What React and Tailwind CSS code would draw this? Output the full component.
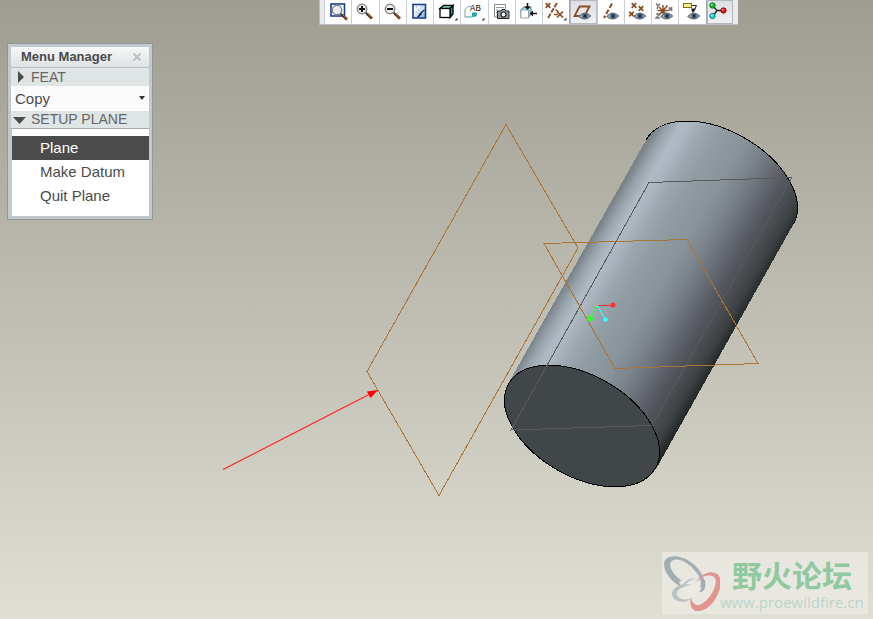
import React from "react";

const BROWN = "#8a4b22";

function Eye() {
  return (
    <g>
      <path d="M10 16.5Q15.5 10 21.5 16Q16 21.500 10 16.500Z" fill="#a3b0bd" stroke="#7b7268" strokeWidth="1.200" />
      <circle cx="16" cy="16" r="2.700" fill="#34608f" />
      <circle cx="16" cy="16" r="1.200" fill="#14263b" />
    </g>
  );
}

function More() {
  return <path d="M24.500 17.500v3h-3z" fill="#444" />;
}

function Lens({ x, y }) {
  return (
    <g transform={`translate(${x} ${y})`}>
      <path d="M3.500 3.500l2 2" stroke="#333" strokeWidth="1.800" />
      <path d="M5 4.800l5 4.700" stroke="#5f3119" strokeWidth="2.800" />
      <path d="M5.500 4.500l4.500 4" stroke="#c48a64" strokeWidth="0.900" />
      <circle r="4.700" fill="#eceeee" stroke="#85898b" strokeWidth="1.500" />
    </g>
  );
}

function Cross({ x, y, color = BROWN, s = 2.3 }) {
  return (
    <path
      d={`M${x - s} ${y - s}L${x + s} ${y + s}M${x + s} ${y - s}L${x - s} ${y + s}`}
      stroke={color}
      strokeWidth="1.700"
    />
  );
}

const tools = [
  {
    name: "Zoom to fit",
    art: (
      <>
        <rect x="7" y="4" width="13.500" height="12" fill="#fff" stroke="#123f91" strokeWidth="1.600" />
        <Lens x={13} y={10} />
      </>
    ),
  },
  {
    name: "Zoom in",
    art: (
      <>
        <Lens x={11} y={9} />
        <path d="M8 9h6M11 6v6" stroke="#111" strokeWidth="2" />
      </>
    ),
  },
  {
    name: "Zoom out",
    art: (
      <>
        <Lens x={11} y={9} />
        <path d="M8 9h6" stroke="#111" strokeWidth="2" />
      </>
    ),
  },
  {
    name: "Repaint",
    art: (
      <>
        <defs>
          <linearGradient id="repaint" x1="0" y1="0" x2="1" y2="1">
            <stop offset="0.400" stopColor="#f0f5fa" />
            <stop offset="1" stopColor="#78a5dc" />
          </linearGradient>
        </defs>
        <rect x="7" y="4.500" width="12.500" height="13.500" fill="url(#repaint)" stroke="#123f91" strokeWidth="1.600" />
        <path d="M18.500 10l-2.500 2-2 2" stroke="#0b2252" strokeWidth="1.200" fill="none" />
        <path d="M14.500 12.500l1.500 1.500-3 3h-2z" fill="#0b2252" />
        <path d="M10 7h1M14 8h1M12 10h1M16 6.500h1M9.500 12h1" stroke="#7a8fa9" strokeWidth="1" />
      </>
    ),
  },
  {
    name: "Display style",
    more: true,
    art: (
      <>
        <path d="M7 8.500L10.500 5.500H20L17 8.500z" fill="#8ff0ee" stroke="#000" strokeWidth="1.300" />
        <path d="M17 8.500L20 5.500V14L17 17.500z" fill="#1b9c9c" stroke="#000" strokeWidth="1.300" />
        <rect x="7" y="8.500" width="10" height="9" fill="#fff" stroke="#000" strokeWidth="1.300" />
      </>
    ),
  },
  {
    name: "Saved orientations",
    more: true,
    art: (
      <>
        <path d="M5 9.500L8 6.500h3M5 9.500V17h7" stroke="#8b9599" fill="none" />
        <path d="M12 12.500h5V15l-2 2h-3z" fill="#27a5ae" />
        <path d="M5 17h8" stroke="#6fd5d9" />
        <text x="10" y="11" fontFamily="Liberation Mono, monospace" fontSize="9" fill="#111">
          AB
        </text>
      </>
    ),
  },
  {
    name: "View manager",
    art: (
      <>
        <path d="M6.500 4.500h11V9M6.500 4.500V17H9" fill="none" stroke="#888" />
        <path d="M8 7.500h8M8 10h2M8 12.500h1M8 15h1" stroke="#999" />
        <path d="M11 11h2l1-1.500h3l1 1.500h3v7.500H9.500V11z" fill="#969ba0" stroke="#202428" />
        <circle cx="15.500" cy="14.500" r="2.500" fill="#f3f3f3" stroke="#222" strokeWidth="1.200" />
      </>
    ),
  },
  {
    name: "Section",
    art: (
      <>
        <path d="M6 9.500L9 7h7v7l-2.500 3.500H6z" fill="#8ee5e6" stroke="#5d777c" />
        <rect x="6" y="10" width="7.500" height="8" fill="#fff" stroke="#8fa7ab" />
        <path d="M12.500 3v5M22 13.500h-5" stroke="#111" strokeWidth="1.600" />
        <path d="M9.500 6.500h6l-3 3.500zM18 10.500v6l-3.500-3z" fill="#111" />
      </>
    ),
  },
  {
    name: "Datum display filters",
    more: true,
    art: (
      <>
        <path d="M15 3L6 18" stroke={BROWN} strokeWidth="1.900" strokeDasharray="5 1.200" />
        <Cross x={6} y={5.5} />
        <Cross x={18} y={14.5} s={3} />
        <path d="M13.500 9.500l3 2M12 14.500h4" stroke={BROWN} strokeWidth="1.400" />
      </>
    ),
  },
  {
    name: "Plane display",
    on: true,
    art: (
      <>
        <path d="M10.500 6.500H20.500L15.500 16H5.500z" fill="none" stroke={BROWN} strokeWidth="1.800" />
        <Eye />
      </>
    ),
  },
  {
    name: "Axis display",
    art: (
      <>
        <path d="M15 3.500L7 18" stroke={BROWN} strokeWidth="2" strokeDasharray="5 2" />
        <Eye />
      </>
    ),
  },
  {
    name: "Point display",
    art: (
      <>
        <Cross x={10} y={5.5} />
        <Cross x={17} y={8.5} />
        <Cross x={7.5} y={14} />
        <Eye />
      </>
    ),
  },
  {
    name: "Coordinate system display",
    art: (
      <>
        <path d="M12 5v11M6.500 10.500h11M8 7l8 8M16.500 5.500L8 15" stroke={BROWN} strokeWidth="1.400" />
        <path d="M5 3.500l2 2.500L9 3.500M7 6L6 9" stroke="#777" strokeWidth="1.400" fill="none" />
        <Cross x={19.5} y={9} color="#777" s={1.7} />
        <path d="M5 14h4l-4 4h4" stroke="#777" strokeWidth="1.400" fill="none" />
        <Eye />
      </>
    ),
  },
  {
    name: "Annotation display",
    art: (
      <>
        <rect x="5.500" y="3.500" width="8" height="4" fill="#f5ef86" stroke="#77702a" />
        <path d="M14 5.500h4.500L15.500 12" stroke="#222" fill="none" />
        <path d="M13 8.500h5L14.500 13z" fill="#222" />
        <Eye />
      </>
    ),
  },
  {
    name: "Spin center",
    on: true,
    art: (
      <>
        <path d="M7 6l4 4.500L7 16M11 10.500h6" stroke="#222" strokeWidth="1.300" fill="none" />
        <circle cx="6.500" cy="5.500" r="2.700" fill="#0fc22b" stroke="#0a5a17" strokeWidth="0.800" />
        <circle cx="17.500" cy="10.500" r="2.700" fill="#e31414" stroke="#6f0909" strokeWidth="0.800" />
        <circle cx="6.500" cy="16" r="2.700" fill="#25d5dd" stroke="#096a70" strokeWidth="0.800" />
        <circle cx="5.800" cy="4.800" r="0.800" fill="#d9ffdf" />
        <circle cx="16.800" cy="9.800" r="0.800" fill="#ffd9d9" />
        <circle cx="5.800" cy="15.300" r="0.800" fill="#e5ffff" />
      </>
    ),
  },
];

function Toolbar() {
  return (
    <div
      role="toolbar"
      aria-label="Graphics toolbar"
      className="ml-[319px] flex h-[25px] w-[419px] border-b border-l border-[#b9bec2] bg-[#e9ebee] pr-[5px] pl-1"
    >
      {tools.map((t) => (
        <button
          key={t.name}
          type="button"
          aria-label={t.name}
          className={
            t.on
              ? "h-6 min-w-0 flex-1 border-l border-[#a5aaaf] bg-linear-to-b from-[#dcdfe3] to-[#eff0f2] inset-ring inset-ring-[#b4b8bc]"
              : "h-6 min-w-0 flex-1 border-l border-[#c9cfd8] bg-white"
          }
        >
          <svg viewBox="1 0 26 24" className="h-6 w-[26px] overflow-visible" aria-hidden="true">
            {t.art}
            {t.more && <More />}
          </svg>
        </button>
      ))}
    </div>
  );
}

function MenuManager() {
  return (
    <section
      aria-label="Menu Manager"
      className="mt-[18px] ml-[7px] flex w-[146px] flex-col border border-[#92979a] bg-[#c3c8cc] p-[3px] text-[15px] text-[#4b4b4b]"
    >
      <header className="flex h-[21px] items-center justify-between border-b border-[#b9bec1] bg-linear-to-b from-[#f6f7f7] to-[#dfe2e4] pr-1.5 pl-2.5">
        <h1 className="text-[13px] font-bold whitespace-nowrap">Menu Manager</h1>
        <button type="button" aria-label="Close" className="flex size-3 items-center justify-center">
          <svg viewBox="0 0 8 8" className="size-2">
            <path d="M0.500 0.500l7 7M7.500 0.500l-7 7" stroke="#bcc0c2" strokeWidth="2" />
          </svg>
        </button>
      </header>
      <button type="button" className="flex h-[18px] items-center bg-[#dfe4e4] text-left text-[14px] text-[#666]">
        <svg viewBox="0 0 20 18" className="h-[18px] w-5 shrink-0">
          <path d="M7 3v12l6-6z" fill="#4b4b4b" />
        </svg>
        FEAT
      </button>
      <div className="relative flex h-[25px] bg-[#fbfbfb]">
        <select aria-label="Feature action" className="w-full appearance-none bg-transparent pl-1 leading-6 outline-none">
          <option>Copy</option>
        </select>
        <svg viewBox="0 0 6 4" className="pointer-events-none absolute top-2.5 right-1 h-1 w-1.5">
          <path d="M0 0h6L3 4z" fill="#333" />
        </svg>
      </div>
      <button
        type="button"
        className="flex h-[18px] items-center border-b border-[#a5aaab] bg-[#dfe4e4] text-left text-[14px] whitespace-nowrap text-[#666]"
      >
        <svg viewBox="0 0 20 18" className="h-[18px] w-5 shrink-0">
          <path d="M2 6h13l-6.500 7z" fill="#4b4b4b" />
        </svg>
        SETUP PLANE
      </button>
      <ul className="border-l border-[#c3c8cc] bg-white pt-[7px] pb-2">
        {["Plane", "Make Datum", "Quit Plane"].map((item, i) => (
          <li key={item}>
            <button
              type="button"
              className={
                i === 0
                  ? "h-6 w-full bg-[#4b4b4b] pl-7 text-left leading-6 text-white"
                  : "h-6 w-full pl-7 text-left leading-6"
              }
            >
              {item}
            </button>
          </li>
        ))}
      </ul>
    </section>
  );
}

function Scene() {
  return (
    <svg viewBox="0 0 873 619" className="absolute inset-0 h-full w-full" role="img" aria-label="Cylinder with datum planes">
      <defs>
        <linearGradient id="shade" gradientUnits="userSpaceOnUse" x1="508" y1="383" x2="656" y2="469">
          <stop offset="0" stopColor="#7b8489" />
          <stop offset="0.050" stopColor="#97a2ab" />
          <stop offset="0.115" stopColor="#b0bac4" />
          <stop offset="0.160" stopColor="#abb6c0" />
          <stop offset="0.240" stopColor="#9ba6af" />
          <stop offset="0.340" stopColor="#909ba2" />
          <stop offset="0.480" stopColor="#89939a" />
          <stop offset="0.580" stopColor="#7d858c" />
          <stop offset="0.680" stopColor="#6b7179" />
          <stop offset="0.780" stopColor="#575a62" />
          <stop offset="0.860" stopColor="#4a4e52" />
          <stop offset="0.930" stopColor="#3d4143" />
          <stop offset="1" stopColor="#222425" />
        </linearGradient>
      </defs>
      <g shapeRendering="crispEdges">
        <path d="M508.500 383L646 140A84.600 50.400 30 0 1 793.500 224L656 469z" fill="url(#shade)" />
        <path d="M646 140A84.600 50.400 30 0 1 793.500 224" fill="none" stroke="#000" />
        <ellipse cx="582" cy="426" rx="84.600" ry="50.400" transform="rotate(30 582 426)" fill="#414649" stroke="#000" />
        <path d="M792 177.500L649 182.500L511 430L652 425.500" fill="none" stroke="#5c5a58" />
        <path d="M652 425.500L792 177.500" stroke="#5b5c5e" strokeOpacity="0.800" />
        <path d="M506 124.500L578 248L439 495.500L367 371.500z" fill="none" stroke="#aa7434" />
        <path d="M544 243.500L687 239.500L758 363.500L615 368.500z" fill="none" stroke="#aa7434" />
        <path d="M597.500 305.500H613" stroke="#ff3030" />
        <path d="M597.500 305.500L590 318" stroke="#30ff30" />
        <path d="M597.500 305.500L605 319" stroke="#30ffff" />
      </g>
      <circle cx="613" cy="305" r="2.600" fill="#ff3030" />
      <circle cx="590" cy="318.500" r="3" fill="#30ff30" />
      <circle cx="605.500" cy="319.500" r="2.300" fill="#30ffff" />
      <path d="M223 469.500L370 394" stroke="#f22" strokeWidth="1.200" />
      <path d="M378 390L367 391.500L370.500 398z" fill="#f00" />
    </svg>
  );
}

function Watermark() {
  return (
    <a
      href="#forum"
      className="mt-auto mr-[5px] mb-[5px] flex h-[62px] w-[206px] self-end bg-[#ebeae4]/80"
    >
      <svg viewBox="0 0 58 62" className="h-[62px] w-[58px] shrink-0" aria-hidden="true">
        <path fillRule="evenodd" fill="#a1aeb3" d="M4 7C12 0 31 7 39 21C45 31 43 37 41 39C35 43 16 36 8 26C1 17 1 10 4 7ZM10 9C6 12 9 19 15 25C24 33 35 38 38 35C40 32 39 26 34 20C26 9 14 5 10 9Z" />
        <path fill="#ebeae4" d="M17 30l7-3 16 9-6 8-10-2z" />
        <path fill="#b9c2c4" d="M30 33C18 30 9 37 10 43C12 51 24 52 32 45C25 49 17 48 15 43C14 38 19 34 30 33Z" />
        <path fill="#a1aeb3" d="M43 28C44 33 43 38 40 39L38 40C40 36 40 32 40 28z" />
        <path fill="#b9c2c4" d="M19 36C21 30 27 26 34 26C28 28 23 31 21 36z" />
        <path fill="#e09590" d="M34 30C40 20 52 17 57 24C63 34 51 58 37 59C30 60 27 53 29 46C31 53 35 55 41 51C50 45 56 31 53 26C49 21 41 23 34 30Z" />
      </svg>
      <span className="flex min-w-0 flex-col whitespace-nowrap">
        <span className="pl-3 pt-0.5 font-['Noto_Sans_CJK_SC',sans-serif] text-[30px] leading-10 font-bold text-[#90c9a0]">
          野火论坛
        </span>
        <span className="font-['Open_Sans',sans-serif] text-[15px] leading-4 text-[#b9d6ca]">www.proewildfire.cn</span>
      </span>
    </a>
  );
}

export default function App() {
  return (
    <main className="relative min-h-screen bg-linear-to-b from-[#9f9d91] to-[#e0dfd4] font-['Liberation_Sans',Arial,sans-serif]">
      <Scene />
      <div className="relative flex min-h-screen flex-col">
        <Toolbar />
        <MenuManager />
        <Watermark />
      </div>
    </main>
  );
}
